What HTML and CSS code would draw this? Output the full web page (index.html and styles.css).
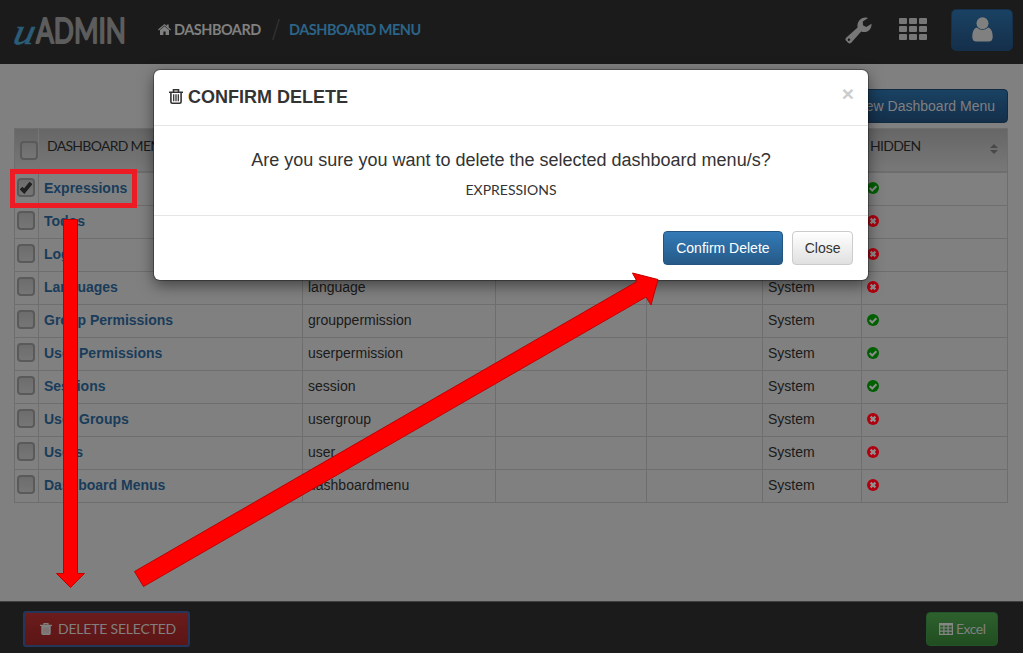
FILE: index.html
```html
<!DOCTYPE html>
<html lang="en">
<head>
<meta charset="utf-8">
<title>uAdmin - Dashboard Menu</title>
<link rel="stylesheet" href="styles.css">
</head>
<body>
<svg class="defs" width="0" height="0">
  <symbol id="yes" viewBox="0 0 12 12"><circle cx="6" cy="6" r="6" fill="#006000"/><path d="M2.700 6l2.500 2.500 4.200-4.300" fill="none" stroke="#8c8c8c" stroke-width="2"/></symbol>
  <symbol id="no" viewBox="0 0 12 12"><circle cx="6" cy="6" r="6" fill="#b0000f"/><path d="M3.600 3.600l4.800 4.800M8.400 3.600L3.600 8.400" fill="none" stroke="#909090" stroke-width="2.200"/></symbol>
</svg>
<div class="page">
  <header class="topbar">
    <svg class="logo" width="120" height="42" viewBox="0 -4 120 42">
      <g transform="translate(1 30.500) skewX(-12)"><text x="0" y="0" class="logo-u" textLength="21" lengthAdjust="spacingAndGlyphs">u</text></g>
      <text x="25" y="29.500" class="logo-admin" textLength="90" lengthAdjust="spacingAndGlyphs">ADMIN</text>
    </svg>
    <nav class="crumbs">
      <svg class="home" width="13" height="11" viewBox="0 0 13 11"><path d="M6.5 2.2L11 6v5H7.6V7.6H5.4V11H2V6z M0 5.6L6.5 0l2.300 2V.5h1.900v3.100L13 5.600l-.8.8-5.700-4.900L.8 6.400z" fill="#808080"/></svg>
      <span class="crumb">DASHBOARD</span>
      <svg class="slash" width="8" height="21" viewBox="0 0 8 21"><path d="M7.2 0L.8 21" stroke="#303030" stroke-width="1.5"/></svg>
      <span class="crumb active">DASHBOARD MENU</span>
    </nav>
    <div class="tools">
      <svg class="wrench" width="27" height="27" viewBox="0 0 27 27"><path fill="#777" fill-rule="evenodd" d="M1.1 20.8L12.6 10.4C11.6 5 15.5.4 20.5.4c1.3 0 2.2.3 2.6.7L17.8 4.5l.2 3.7 3.2 1.8 5.3-3.3c.4 4.8-3 8.4-7.3 8.4-1.2 0-2.2-.3-3-.7L6.2 25.7c-1 1.1-2.2 1-3.1 0l-2-2c-.9-.9-.9-2 0-2.9zM4.3 21.5a1.2 1.2 0 1 0 .1 2.3 1.2 1.2 0 0 0-.1-2.3z"/></svg>
      <div class="apps"><i></i><i></i><i></i><i></i><i></i><i></i><i></i><i></i><i></i></div>
      <div class="user"><svg width="21" height="25" viewBox="0 0 21 25"><path fill="#808080" d="M4.8 10.6C2 11.5.3 14.7.3 20c0 3 1.6 4.5 3.8 4.5h12.8c2.2 0 3.8-1.5 3.8-4.5 0-5.3-1.7-8.5-4.5-9.4a7.9 7.9 0 0 1-11.4 0z"/><circle cx="10.5" cy="6.3" r="6" fill="#808080"/></svg></div>
    </div>
  </header>

  <main class="content">
    <div class="actions"><div class="add">Add New Dashboard Menu</div></div>
    <div class="table">
      <div class="row head"><div class="check"><i class="box"></i></div><div class="title">DASHBOARD MENU</div><div></div><div></div><div></div><div></div><div class="title hidden-col">HIDDEN<svg width="8" height="10" viewBox="0 0 8 10"><path d="M0 4l4-4 4 4zM0 6h8l-4 4z" fill="#484848"/></svg></div></div>
      <div class="row"><div class="check"><i class="box"><svg width="12" height="13" viewBox="0 0 12 13"><path d="M1 7l3.200 3.200L11 2" fill="none" stroke="#202020" stroke-width="3.800"/></svg></i></div><div class="name">Expressions</div><div>expression</div><div></div><div></div><div>System</div><div><svg class="state"><use href="#yes"/></svg></div></div>
      <div class="row"><div class="check"><i class="box"></i></div><div class="name">Todos</div><div>todo</div><div></div><div></div><div>System</div><div><svg class="state"><use href="#no"/></svg></div></div>
      <div class="row"><div class="check"><i class="box"></i></div><div class="name">Logs</div><div>log</div><div></div><div></div><div>System</div><div><svg class="state"><use href="#no"/></svg></div></div>
      <div class="row"><div class="check"><i class="box"></i></div><div class="name">Languages</div><div>language</div><div></div><div></div><div>System</div><div><svg class="state"><use href="#no"/></svg></div></div>
      <div class="row"><div class="check"><i class="box"></i></div><div class="name">Group Permissions</div><div>grouppermission</div><div></div><div></div><div>System</div><div><svg class="state"><use href="#yes"/></svg></div></div>
      <div class="row"><div class="check"><i class="box"></i></div><div class="name">User Permissions</div><div>userpermission</div><div></div><div></div><div>System</div><div><svg class="state"><use href="#yes"/></svg></div></div>
      <div class="row"><div class="check"><i class="box"></i></div><div class="name">Sessions</div><div>session</div><div></div><div></div><div>System</div><div><svg class="state"><use href="#yes"/></svg></div></div>
      <div class="row"><div class="check"><i class="box"></i></div><div class="name">User Groups</div><div>usergroup</div><div></div><div></div><div>System</div><div><svg class="state"><use href="#no"/></svg></div></div>
      <div class="row"><div class="check"><i class="box"></i></div><div class="name">Users</div><div>user</div><div></div><div></div><div>System</div><div><svg class="state"><use href="#no"/></svg></div></div>
      <div class="row"><div class="check"><i class="box"></i></div><div class="name">Dashboard Menus</div><div>dashboardmenu</div><div></div><div></div><div>System</div><div><svg class="state"><use href="#no"/></svg></div></div>
    </div>
  </main>

  <footer class="bottombar">
    <div class="delete"><svg width="12" height="12" viewBox="0 0 12 12"><path d="M4 1.8V.6h4v1.2M0 2.4h12" fill="none" stroke="#808080" stroke-width="1.2"/><path d="M1.3 3h9.4v7.6q0 1.4-1.4 1.4H2.7q-1.4 0-1.4-1.4z" fill="#808080"/><path d="M4 4.5v6M6 4.5v6M8 4.5v6" stroke="#76605f" stroke-width=".8"/></svg><span>DELETE SELECTED</span></div>
    <div class="excel"><svg width="14" height="12" viewBox="0 0 14 12"><path d="M.6.6h12.8v10.8H.6zM.6 1.8h12.8M.6 5h12.8M.6 8.2h12.8M4.9 1v10.4M9.1 1v10.4" fill="none" stroke="#868686" stroke-width="1.2"/></svg><span>Excel</span></div>
  </footer>
</div>

<div class="modal">
  <div class="modal-head">
    <svg width="14" height="15" viewBox="0 0 14 15"><path d="M4.5 2.6V.8h5v1.8M0 3.2h14M1.9 3.5v9.3q0 1.4 1.4 1.4h7.4q1.4 0 1.4-1.4V3.5" fill="none" stroke="#333" stroke-width="1.600"/><path d="M4.7 5.3v7M7 5.3v7M9.3 5.3v7" stroke="#333" stroke-width="1.300"/></svg>
    <h4>CONFIRM DELETE</h4>
    <span class="close">×</span>
  </div>
  <div class="modal-body"><p class="ask">Are you sure you want to delete the selected dashboard menu/s?</p><p class="items">EXPRESSIONS</p></div>
  <div class="modal-foot"><div class="btn primary">Confirm Delete</div><div class="btn">Close</div></div>
</div>

<svg class="annotations" width="1023" height="653" viewBox="0 0 1023 653">
  <rect x="12.500" y="171.500" width="122" height="34" fill="none" stroke="#ed1c24" stroke-width="5"/>
  <path d="M63.5 219.5h14V573.5h7L70.5 587.500 56.500 573.500h7z" fill="#f00" stroke="#c00000"/>
  <path d="M134.500 571.500L637 281.500 632.500 273 658 279.500 651 305 646 297 143.500 586.500z" fill="#f00" stroke="#c00000"/>
</svg>
</body>
</html>
```
FILE: styles.css
```css
* { box-sizing: border-box; }
body { margin: 0; background: #808080; font: 14px/20px "Liberation Sans", Arial, sans-serif; color: #1a1a1a; overflow: hidden; }
.defs { position: absolute; }
svg { flex: none; display: block; }
.page { height: 653px; display: flex; flex-direction: column; }
.topbar { height: 64px; background: #1b1b1b; display: flex; align-items: flex-start; padding: 9px 10px 0 11px; }
.logo { overflow: visible; }
.logo-u { font: italic 400 37px "Liberation Serif", serif; fill: #2b5c78; stroke: #2b5c78; stroke-width: .6; }
.logo-admin { font: 400 35px Lato, sans-serif; fill: #5d5d5d; stroke: #5d5d5d; stroke-width: 2; stroke-linejoin: round; }
.crumbs { display: flex; align-items: center; margin-left: 27px; height: 41px; font: 700 14.500px/20px Lato, sans-serif; }
.crumb { color: #808080; width: 87px; letter-spacing: -0.5px; margin-left: 3px; white-space: nowrap; }
.slash { margin-left: 11px; }
.crumb.active { color: #2c6488; width: 132px; margin-left: 9px; }
.tools { margin-left: auto; display: flex; }
.wrench { margin-top: 8px; }
.apps { display: grid; grid-template-columns: repeat(3, 8px); grid-template-rows: repeat(3, 6px); gap: 2px; column-gap: 2px; margin: 9px 0 0 27px; }
.apps i { background: #777; border-radius: 1px; }
.user { margin-left: 24px; width: 62px; height: 42px; border: 1px solid #15304a; border-radius: 5px; background: linear-gradient(#1a4263, #142f4a); display: flex; justify-content: center; padding-top: 7px; }
.content { flex: 1; padding: 25px 15px 0 14px; }
.actions { display: flex; justify-content: flex-end; }
.add { height: 34px; line-height: 32px; padding: 0 12px; border: 1px solid #122b40; border-radius: 4px; background: linear-gradient(#1a4263, #142f4a); color: #808080; }
.table { margin-top: 5px; border-left: 1px solid #6e6e6e; width: 994px; }
.row { display: grid; grid-template-columns: 24px 264px 193px 151px 116px 99px 146px; height: 33px; border-bottom: 1px solid #6e6e6e; }
.row > div { border-right: 1px solid #6e6e6e; padding: 5px 5px 0; white-space: nowrap; }
.row > .check { padding: 5px 2px; }
.head { height: 45px; background: linear-gradient(#666, #787878); border-top: 1px solid #6e6e6e; border-bottom-width: 2px; }
.head > .check { padding: 12px 0 0 5px; }
.head > div { border-right-color: transparent; }
.head > .check { border-right-color: #757575; }
.head > div:last-child { border-right-color: #6e6e6e; }
.row > .title { padding: 7px 9px 0 8px; font: 14px/20px Lato, sans-serif; letter-spacing: -0.7px; }
.row > .hidden-col { display: flex; justify-content: space-between; }
.hidden-col svg { margin-top: 8px; }
.box { display: flex; width: 18px; height: 19px; border: 2px solid #5a5a5a; border-radius: 4px; background: linear-gradient(#6d6d6d, #767676); align-items: center; justify-content: center; }
.row > .name { color: #193c5a; font-weight: 700; }
.state { width: 12px; height: 12px; margin-top: 4px; }
.bottombar { height: 52px; border-top: 1px solid #404040; background: #1b1b1b; display: flex; justify-content: space-between; padding: 9px 25px 0 23px; font: 14px/20px Lato, sans-serif; color: #808080; }
.delete { display: flex; align-items: center; width: 167px; height: 36px; border: 2px solid #25365a; border-radius: 3px; background: linear-gradient(#6b1c1c, #5c1515); padding-left: 15px; gap: 6px; letter-spacing: -0.2px; }
.excel { display: flex; align-items: center; width: 72px; height: 34px; margin-top: 1px; border: 1px solid #23542a; border-radius: 4px; background: linear-gradient(#2e602e, #214e20); padding-left: 12px; gap: 3px; letter-spacing: -0.5px; }
.modal { position: absolute; left: 154px; top: 70px; width: 714px; height: 210px; background: #fff; border-radius: 6px; box-shadow: 0 0 0 1px rgba(0,0,0,.3), 0 5px 15px rgba(0,0,0,.5); color: #333; display: flex; flex-direction: column; }
.modal-head { height: 56px; border-bottom: 1px solid #e5e5e5; display: flex; align-items: center; padding: 0 14px 2px 15px; }
.modal-head h4 { margin: 0 0 0 5px; font-size: 18px; line-height: 20px; }
.close { margin: -6px 0 0 auto; font: 700 21px/21px "Liberation Sans", sans-serif; color: #ccc; }
.modal-body { height: 90px; border-bottom: 1px solid #e5e5e5; text-align: center; padding-top: 24px; }
.ask { margin: 0; font-size: 18px; line-height: 20px; }
.items { margin: 10px 0 0; font: 14px/20px Lato, sans-serif; }
.modal-foot { display: flex; justify-content: flex-end; gap: 9px; padding: 15px; }
.btn { height: 34px; line-height: 32px; border: 1px solid #ccc; border-radius: 4px; padding: 0 11.500px; background: linear-gradient(#fff, #e0e0e0); }
.btn.primary { color: #fff; border-color: #245580; background: linear-gradient(#337ab7, #265a88); width: 120px; padding: 0 12px; }
.annotations { position: absolute; left: 0; top: 0; }
```
